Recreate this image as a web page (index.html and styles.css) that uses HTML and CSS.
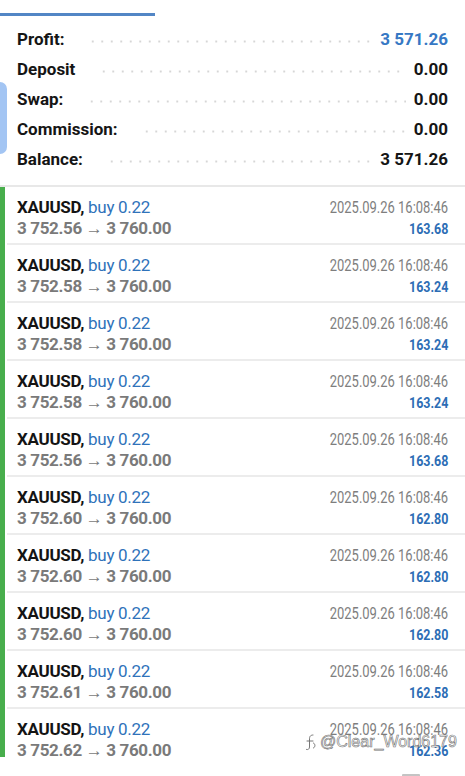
FILE: index.html
```html
<!DOCTYPE html>
<html lang="en">
<head>
    <meta charset="UTF-8">
    <meta name="viewport" content="width=device-width, initial-scale=1.0">
    <title>History</title>
    <link rel="stylesheet" href="styles.css">
</head>
<body>
    <div class="screen">
        <div class="tab-line"></div>

        <!-- summary -->
        <div class="summary">
            <div class="sum-row">
                <span class="sum-label">Profit:</span>
                <span class="leader"></span>
                <span class="sum-value blue">3 571.26</span>
            </div>
            <div class="sum-row">
                <span class="sum-label">Deposit</span>
                <span class="leader"></span>
                <span class="sum-value">0.00</span>
            </div>
            <div class="sum-row">
                <span class="sum-label">Swap:</span>
                <span class="leader"></span>
                <span class="sum-value">0.00</span>
            </div>
            <div class="sum-row">
                <span class="sum-label">Commission:</span>
                <span class="leader"></span>
                <span class="sum-value">0.00</span>
            </div>
            <div class="sum-row">
                <span class="sum-label">Balance:</span>
                <span class="leader"></span>
                <span class="sum-value">3 571.26</span>
            </div>
        </div>

        <!-- deals -->
        <div class="deals">
            <div class="deal">
                <div class="deal-line">
                    <span class="symbol">XAUUSD, <span class="side">buy 0.22</span></span>
                    <span class="time">2025.09.26 16:08:46</span>
                </div>
                <div class="deal-line">
                    <span class="prices">3 752.56 → 3 760.00</span>
                    <span class="pl">163.68</span>
                </div>
            </div>
            <div class="deal">
                <div class="deal-line">
                    <span class="symbol">XAUUSD, <span class="side">buy 0.22</span></span>
                    <span class="time">2025.09.26 16:08:46</span>
                </div>
                <div class="deal-line">
                    <span class="prices">3 752.58 → 3 760.00</span>
                    <span class="pl">163.24</span>
                </div>
            </div>
            <div class="deal">
                <div class="deal-line">
                    <span class="symbol">XAUUSD, <span class="side">buy 0.22</span></span>
                    <span class="time">2025.09.26 16:08:46</span>
                </div>
                <div class="deal-line">
                    <span class="prices">3 752.58 → 3 760.00</span>
                    <span class="pl">163.24</span>
                </div>
            </div>
            <div class="deal">
                <div class="deal-line">
                    <span class="symbol">XAUUSD, <span class="side">buy 0.22</span></span>
                    <span class="time">2025.09.26 16:08:46</span>
                </div>
                <div class="deal-line">
                    <span class="prices">3 752.58 → 3 760.00</span>
                    <span class="pl">163.24</span>
                </div>
            </div>
            <div class="deal">
                <div class="deal-line">
                    <span class="symbol">XAUUSD, <span class="side">buy 0.22</span></span>
                    <span class="time">2025.09.26 16:08:46</span>
                </div>
                <div class="deal-line">
                    <span class="prices">3 752.56 → 3 760.00</span>
                    <span class="pl">163.68</span>
                </div>
            </div>
            <div class="deal">
                <div class="deal-line">
                    <span class="symbol">XAUUSD, <span class="side">buy 0.22</span></span>
                    <span class="time">2025.09.26 16:08:46</span>
                </div>
                <div class="deal-line">
                    <span class="prices">3 752.60 → 3 760.00</span>
                    <span class="pl">162.80</span>
                </div>
            </div>
            <div class="deal">
                <div class="deal-line">
                    <span class="symbol">XAUUSD, <span class="side">buy 0.22</span></span>
                    <span class="time">2025.09.26 16:08:46</span>
                </div>
                <div class="deal-line">
                    <span class="prices">3 752.60 → 3 760.00</span>
                    <span class="pl">162.80</span>
                </div>
            </div>
            <div class="deal">
                <div class="deal-line">
                    <span class="symbol">XAUUSD, <span class="side">buy 0.22</span></span>
                    <span class="time">2025.09.26 16:08:46</span>
                </div>
                <div class="deal-line">
                    <span class="prices">3 752.60 → 3 760.00</span>
                    <span class="pl">162.80</span>
                </div>
            </div>
            <div class="deal">
                <div class="deal-line">
                    <span class="symbol">XAUUSD, <span class="side">buy 0.22</span></span>
                    <span class="time">2025.09.26 16:08:46</span>
                </div>
                <div class="deal-line">
                    <span class="prices">3 752.61 → 3 760.00</span>
                    <span class="pl">162.58</span>
                </div>
            </div>
            <div class="deal">
                <div class="deal-line">
                    <span class="symbol">XAUUSD, <span class="side">buy 0.22</span></span>
                    <span class="time">2025.09.26 16:08:46</span>
                </div>
                <div class="deal-line">
                    <span class="prices">3 752.62 → 3 760.00</span>
                    <span class="pl">162.36</span>
                </div>
            </div>
        </div>

        <div class="bottom">
            <span class="bottom-edge"></span>
        </div>

        <!-- overlays -->
        <div class="edge-handle"></div>
        <div class="watermark">
            <svg class="wm-logo" width="14" height="20" viewBox="0 0 14 20">
                <path d="M9 3 C6 3 5.5 5 5.5 7 L5.5 15 C5.5 17 4 18 2.5 17.5" fill="none" stroke="#fff" stroke-width="3" stroke-linecap="round"/>
                <path d="M9 3 C6 3 5.5 5 5.5 7 L5.5 15 C5.5 17 4 18 2.5 17.5" fill="none" stroke="#777" stroke-width="1" stroke-linecap="round"/>
                <path d="M3 9 L9 9 M9.5 11 C11.5 12 11.5 15 9.5 16" fill="none" stroke="#777" stroke-width="1" stroke-linecap="round"/>
            </svg>
            <span class="wm-text">@Clear_Word6179</span>
        </div>
    </div>
</body>
</html>
```

FILE: styles.css
```css
/* page */
body {
    margin: 0;
    background: #fff;
    font-family: Roboto, "Noto Sans", sans-serif;
    color: #151515;
}

.screen {
    position: relative;
    width: 465px;
    height: 776px;
    overflow: hidden;
    background: #fff;
}

/* tab indicator */
.tab-line {
    margin-top: 13px;
    width: 155px;
    height: 3px;
    background: #5286c5;
}

/* summary block */
.summary {
    padding: 8px 17px 11px;
    border-bottom: 2px solid #e8e8e8;
}

.sum-row {
    display: flex;
    align-items: center;
    height: 30px;
    line-height: 30px;
    font-size: 17px;
    font-weight: 700;
}

.leader {
    flex: 1;
    height: 3px;
    margin: 5px 8px 0 24px;
    background-image: radial-gradient(circle, #d6d6d6 0.9px, transparent 1.3px);
    background-size: 9.5px 3px;
    background-repeat: repeat-x;
}

.sum-value.blue {
    color: #3678c4;
}

/* deals list */
.deals {
    height: 570px;
    overflow: hidden;
    border-left: 5px solid #48ae4c;
}

.deal {
    box-sizing: border-box;
    height: 58px;
    margin-left: 2px;
    padding: 10px 17px 0 10px;
    border-bottom: 2px solid #ececec;
}

.deal-line {
    display: flex;
    justify-content: space-between;
    align-items: baseline;
    line-height: 20px;
}

.symbol {
    font-size: 17px;
    font-weight: 700;
    letter-spacing: -0.3px;
    color: #141414;
}

.side {
    font-weight: 400;
    color: #2f72ba;
}

.prices {
    font-size: 17px;
    font-weight: 700;
    letter-spacing: -0.35px;
    color: #7a7a7a;
}

.time {
    display: inline-block;
    font-size: 16px;
    color: #7e7e7e;
    transform: scaleX(0.81);
    transform-origin: right center;
}

.pl {
    display: inline-block;
    font-size: 15px;
    font-weight: 700;
    color: #2c6db5;
    transform: scaleX(0.83);
    transform-origin: right center;
}

/* bottom strip */
.bottom {
    height: 19px;
    display: flex;
    justify-content: flex-end;
    align-items: flex-end;
    padding-right: 45px;
}

.bottom-edge {
    width: 18px;
    height: 2px;
    border-radius: 1px 1px 0 0;
    background: #c4c4c4;
}

/* overlays */
.edge-handle {
    position: absolute;
    left: 0;
    top: 82px;
    width: 7px;
    height: 72px;
    border-radius: 0 7px 7px 0;
    background: #a3c5f3;
}

.watermark {
    position: absolute;
    left: 304px;
    top: 732px;
    display: flex;
    align-items: center;
    gap: 2px;
}

.wm-text {
    font-family: "Liberation Sans", sans-serif;
    font-size: 16px;
    color: #fff;
    -webkit-text-stroke: 0.6px #6f6f6f;
}
```
